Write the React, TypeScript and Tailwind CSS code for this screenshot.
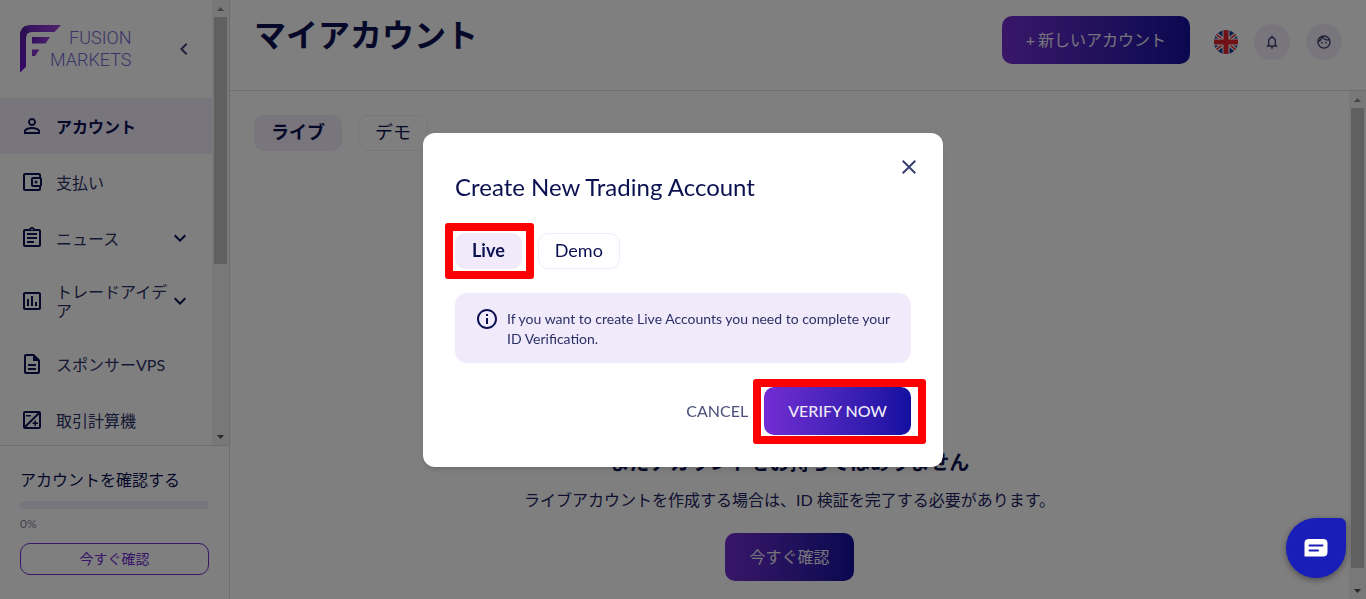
import type { ReactNode } from "react";
import {
  MdPersonOutline,
  MdOutlinePoll,
  MdOutlineDescription,
  MdOutlineExposure,
  MdOutlineFace,
  MdNotificationsNone,
  MdChevronLeft,
  MdExpandMore,
  MdInfoOutline,
  MdClose,
} from "react-icons/md";

function WalletIcon() {
  return (
    <svg viewBox="0 0 24 24" className="size-6" fill="currentColor" aria-hidden="true">
      <path d="M5,3C3.89,3 3,3.9 3,5V19A2,2 0 0,0 5,21H19A2,2 0 0,0 21,19V16.72C21.59,16.37 22,15.74 22,15V9C22,8.26 21.59,7.63 21,7.28V5A2,2 0 0,0 19,3H5M5,5H19V7H13A2,2 0 0,0 11,9V15A2,2 0 0,0 13,17H19V19H5V5M13,9H20V15H13V9M16,10.5A1.5,1.5 0 0,0 14.5,12A1.5,1.5 0 0,0 16,13.5A1.5,1.5 0 0,0 17.5,12A1.5,1.5 0 0,0 16,10.5Z" />
    </svg>
  );
}

function ClipboardIcon() {
  return (
    <svg viewBox="0 0 24 24" className="size-6" fill="currentColor" fillRule="evenodd" aria-hidden="true">
      <path d="M19 3h-4.18C14.4 1.84 13.3 1 12 1s-2.4.84-2.82 2H5a2 2 0 0 0-2 2v14a2 2 0 0 0 2 2h14a2 2 0 0 0 2-2V5a2 2 0 0 0-2-2ZM12 2.8a.8.8 0 1 1 0 1.6.8.8 0 0 1 0-1.6ZM19 19H5V5h14v14Z" />
      <path d="M7 7h10v2H7zM7 11h10v2H7zM7 15h7v2H7z" />
    </svg>
  );
}

function Logo() {
  return (
    <div className="flex">
      <svg viewBox="0 0 42 50" className="h-[50px] w-[42px] shrink-0" aria-hidden="true">
        <defs>
          <linearGradient id="mark" x1="0" y1="0" x2="1" y2="0">
            <stop offset="0" stopColor="#5f1fb8" />
            <stop offset="1" stopColor="#a444dc" />
          </linearGradient>
          <linearGradient id="stem" x1="0" y1="0" x2="0" y2="1">
            <stop offset="0" stopColor="#5a22a0" />
            <stop offset="1" stopColor="#6c10d0" />
          </linearGradient>
        </defs>
        <path d="M0 48.500V12C0 5 4 1 11 1H41L34.500 8H12Q6 8 6 14V42.500Z" fill="url(#mark)" />
        <path d="M0 48.500V12C0 7 2 4 5 2L9 8Q6 9 6 14V42.500Z" fill="url(#stem)" />
        <path d="M12 13H30L25.500 19.500H12Z" fill="url(#mark)" />
        <path d="M12 25.500H19.500L15 32H12Z" fill="#8a35d0" />
      </svg>
      <p className="-ml-3 pt-[3px] text-right font-[Roboto,sans-serif] text-lg leading-[22px] font-light text-[#7468d0]">
        FUSION
        <br />
        MARKETS
      </p>
    </div>
  );
}

function Flag() {
  return (
    <svg viewBox="0 0 24 24" className="size-6" aria-hidden="true">
      <clipPath id="round">
        <circle cx="12" cy="12" r="12" />
      </clipPath>
      <g clipPath="url(#round)">
        <rect width="24" height="24" fill="#0f3b96" />
        <path d="M-2 1 26 23M26 1-2 23" stroke="#fff" strokeWidth="4" />
        <path d="M-2 1 26 23M26 1-2 23" stroke="#e0222c" strokeWidth="1.6" />
        <path d="M12 0V24M0 12H24" stroke="#fff" strokeWidth="7" />
        <path d="M12 0V24M0 12H24" stroke="#e0222c" strokeWidth="5" />
      </g>
    </svg>
  );
}

function Scrollbar({ thumb }: { thumb: string }) {
  return (
    <div className="flex w-[17px] shrink-0 flex-col items-center bg-[#f1f1f1]" aria-hidden="true">
      <div className="flex h-[17px] items-center">
        <svg viewBox="0 0 7 4" className="h-1 w-[7px]" fill="#8b8b8b">
          <path d="M0 4 3.5 0 7 4Z" />
        </svg>
      </div>
      <div className="flex w-[13px] flex-1 flex-col">
        <div className={"w-full bg-[#c1c1c1] " + thumb} />
      </div>
      <div className="flex h-[17px] items-center">
        <svg viewBox="0 0 7 4" className="h-1 w-[7px]" fill="#505050">
          <path d="M0 0 3.5 4 7 0Z" />
        </svg>
      </div>
    </div>
  );
}

type Item = { label: string; icon: ReactNode; active?: boolean; more?: boolean };

const items: Item[] = [
  { label: "アカウント", icon: <MdPersonOutline className="size-6" />, active: true },
  { label: "支払い", icon: <WalletIcon /> },
  { label: "ニュース", icon: <ClipboardIcon />, more: true },
  { label: "トレードアイデア", icon: <MdOutlinePoll className="size-6" />, more: true },
  { label: "スポンサーVPS", icon: <MdOutlineDescription className="size-6" /> },
  { label: "取引計算機", icon: <MdOutlineExposure className="size-6" /> },
];

function Sidebar() {
  return (
    <aside className="flex w-[230px] shrink-0 flex-col border-r border-[#dcdce2]">
      <div className="flex min-h-0 flex-1">
        <div className="min-w-0 flex-1 overflow-hidden">
          <div className="flex h-[98px] items-center justify-between pr-4 pl-5">
            <Logo />
            <button type="button" aria-label="メニューを閉じる" className="text-[#3b4070]">
              <MdChevronLeft className="size-6" />
            </button>
          </div>
          <nav>
            {items.map((item) => (
              <a
                key={item.label}
                href="#"
                className={
                  item.active
                    ? "flex min-h-14 items-center bg-[#f1eafb] px-5 py-4 font-bold"
                    : "flex min-h-14 items-center px-5 py-4"
                }
              >
                <span className="shrink-0">{item.icon}</span>
                <span className={item.active ? "ml-3 w-28 text-base leading-[19px]" : "ml-3 w-28 text-base leading-[19px] text-[#2c3168]"}>
                  {item.label}
                </span>
                {item.more && <MdExpandMore className="size-6 shrink-0" />}
              </a>
            ))}
          </nav>
        </div>
        <Scrollbar thumb="h-3/5" />
      </div>
      <div className="flex h-[154px] flex-col border-t border-[#dcdce2] px-5 pt-[22px]">
        <p className="text-base leading-6">アカウントを確認する</p>
        <div role="progressbar" aria-valuenow={0} aria-label="アカウントを確認する" className="mt-[9px] h-2 rounded bg-[#f1eafb]" />
        <p className="mt-[7px] text-xs leading-4 text-[#84879c]">0%</p>
        <button type="button" className="mt-[11px] h-8 rounded-[10px] border border-[#6f2bd2] text-sm leading-5 text-[#6f2bd2]">
          今すぐ確認
        </button>
      </div>
    </aside>
  );
}

const gradient = "h-12 rounded-[10px] bg-linear-to-r from-[#722dd2] to-[#130fa0] px-6 text-base whitespace-nowrap text-[#eeeaf8] ";

function Tabs({ on, off }: { on: string; off: string }) {
  return (
    <div className="flex gap-4 text-lg leading-6">
      <button type="button" className="h-9 rounded-[10px] border border-[#f1eafb] bg-[#f1eafb] px-4 pb-0.5 font-bold">
        {on}
      </button>
      <button type="button" className="h-9 rounded-[10px] border border-[#f1eafb] px-4 pb-0.5">
        {off}
      </button>
    </div>
  );
}

function Main() {
  return (
    <main className="flex min-w-0 flex-1 flex-col">
      <header className="flex h-[91px] shrink-0 items-start border-b border-[#dcdce2] px-6 pt-4">
        <h1 className="text-[32px] leading-[38px] font-bold">マイアカウント</h1>
        <button type="button" className={gradient + "ml-auto"}>
          <span className="mr-[3px]">+</span>新しいアカウント
        </button>
        <div className="ml-6 flex h-[52px] items-center gap-4 text-[#3b4070]">
          <button type="button" aria-label="English">
            <Flag />
          </button>
          <button type="button" aria-label="通知" className="flex size-9 items-center justify-center rounded-full bg-[#f1eafb]">
            <MdNotificationsNone className="size-4" />
          </button>
          <button type="button" aria-label="プロフィール" className="flex size-9 items-center justify-center rounded-full bg-[#f1eafb]">
            <MdOutlineFace className="size-4" />
          </button>
        </div>
      </header>
      <div className="flex min-h-0 flex-1">
        <div className="flex flex-1 flex-col justify-between px-6 pt-6 pb-[18px]">
          <Tabs on="ライブ" off="デモ" />
          <section className="flex flex-col items-center">
            <h2 className="text-xl leading-6 font-bold">まだアカウントをお持ちではありません</h2>
            <p className="mt-[14px] text-base leading-6 text-[#1c2260]">
              ライブアカウントを作成する場合は、ID 検証を完了する必要があります。
            </p>
            <button type="button" className={gradient + "mt-[21px]"}>
              今すぐ確認
            </button>
          </section>
        </div>
        <Scrollbar thumb="h-[97%]" />
      </div>
    </main>
  );
}

function Dialog() {
  return (
    <div className="fixed inset-0 flex items-center justify-center bg-black/50">
      <div
        role="dialog"
        aria-labelledby="dialog-title"
        className="relative w-full max-w-[520px] rounded-xl bg-white px-8 pt-10 pb-8 shadow-md"
      >
        <button type="button" aria-label="Close" className="absolute top-[22px] right-[22px] text-[#3b4070]">
          <MdClose className="size-6" />
        </button>
        <h2 id="dialog-title" className="text-2xl leading-7">
          Create New Trading Account
        </h2>
        <div className="relative mt-8">
          <Tabs on="Live" off="Demo" />
          <div className="pointer-events-none absolute -top-2.5 -left-2.5 h-14 w-[89px] rounded-[3px] border-8 border-[#ff0000]" />
        </div>
        <div className="mt-6 flex gap-2 rounded-xl bg-[#f1eafb] px-5 pt-4 pb-[14px]">
          <MdInfoOutline className="-mt-0.5 size-6 shrink-0" />
          <p className="text-sm leading-5 text-[#2b3066]">
            If you want to create Live Accounts you need to complete your ID Verification.
          </p>
        </div>
        <div className="mt-6 flex items-center justify-end gap-4">
          <button type="button" className="text-base text-[#4a4f7c]">
            CANCEL
          </button>
          <div className="relative">
            <button type="button" className={gradient + "font-medium"}>
              VERIFY NOW
            </button>
            <div className="pointer-events-none absolute -top-2 -right-[15px] -bottom-[9px] -left-[11px] rounded-[3px] border-8 border-[#ff0000]" />
          </div>
        </div>
      </div>
    </div>
  );
}

export default function App() {
  return (
    <div className="flex h-screen overflow-hidden bg-white font-[Lato,'Noto_Sans_CJK_JP',sans-serif] text-[#0b1150]">
      <Sidebar />
      <Main />
      <Dialog />
      <button
        type="button"
        aria-label="チャット"
        className="fixed right-5 bottom-[21px] flex size-[60px] items-center justify-center rounded-[30px] rounded-tr-md bg-[#1a1eb8] shadow-[0_2px_6px_rgba(0,0,0,0.4)]"
      >
        <svg viewBox="0 0 24 18" className="h-[18px] w-6" aria-hidden="true">
          <path d="M5 0H19Q23.500 0 23.500 4V13Q23.500 17.500 19 17.500H.5V4Q.5 0 5 0Z" fill="#fff" />
          <path d="M5.500 6.500H18.500M5.500 11.500H14" stroke="#1a1eb8" strokeWidth="2" strokeLinecap="round" />
        </svg>
      </button>
    </div>
  );
}
